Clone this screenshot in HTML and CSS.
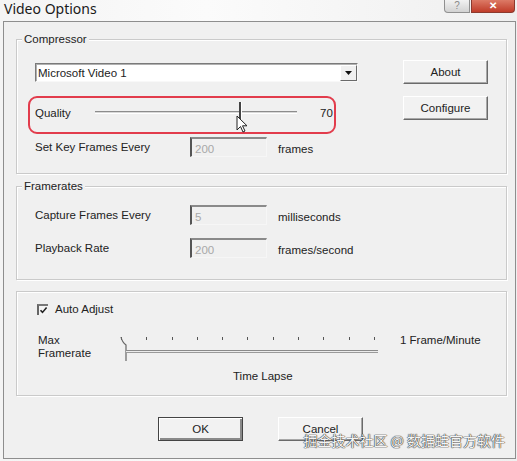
FILE: index.html
```html
<!DOCTYPE html>
<html lang="en">
<head>
    <meta charset="UTF-8">
    <title>Video Options</title>
    <link rel="stylesheet" href="styles.css">
</head>
<body>
    <div class="window">
        <div class="titlebar">
            <span class="title">Video Options</span>
            <div class="caption-buttons">
                <span class="cap-help">?</span>
                <span class="cap-close">&#x2715;</span>
            </div>
        </div>

        <div class="dialog">
            <div class="group group-compressor">
                <span class="group-label">Compressor</span>
                <div class="compressor">
                    <div class="compressor-main">
                        <div class="combo">
                            <span class="combo-text">Microsoft Video 1</span>
                            <span class="combo-drop">
                                <svg width="7" height="4" viewBox="0 0 7 4"><path d="M0 0h7L3.5 4z" fill="#111"/></svg>
                            </span>
                        </div>

                        <div class="quality">
                            <span class="quality-label">Quality</span>
                            <div class="track track-quality">
                                <span class="track-line"></span>
                                <span class="track-thumb"></span>
                            </div>
                            <span class="quality-value">70</span>
                            <svg class="cursor" width="12" height="18" viewBox="0 0 12 18">
                                <path d="M1 1v14l3.5-3.5 2.5 5.5 2-1-2.5-5.2H11z" fill="#fff" stroke="#222" stroke-width="1"/>
                            </svg>
                        </div>

                        <div class="field-row row-keyframes">
                            <span class="field-label">Set Key Frames Every</span>
                            <span class="field-input">200</span>
                            <span class="field-unit">frames</span>
                        </div>
                    </div>

                    <div class="compressor-side">
                        <button class="btn">About</button>
                        <button class="btn">Configure</button>
                    </div>
                </div>
            </div>

            <div class="group group-framerates">
                <span class="group-label">Framerates</span>
                <div class="field-row">
                    <span class="field-label">Capture Frames Every</span>
                    <span class="field-input">5</span>
                    <span class="field-unit">milliseconds</span>
                </div>
                <div class="field-row">
                    <span class="field-label">Playback Rate</span>
                    <span class="field-input">200</span>
                    <span class="field-unit">frames/second</span>
                </div>
            </div>

            <div class="group group-lapse">
                <label class="check-row">
                    <span class="checkbox">
                        <svg width="9" height="9" viewBox="0 0 9 9"><path d="M1.5 4.2l2 2.2L7.6 1.6" fill="none" stroke="#222" stroke-width="1.6"/></svg>
                    </span>
                    Auto Adjust
                </label>

                <div class="lapse-row">
                    <span class="lapse-label">Max<br>Framerate</span>
                    <div class="track track-lapse">
                        <div class="ticks">
                            <i></i><i></i><i></i><i></i><i></i><i></i><i></i><i></i><i></i><i></i><i></i>
                        </div>
                        <svg class="lapse-thumb" width="8" height="26" viewBox="0 0 8 26">
                            <path d="M1 1q1 5 5 8v16" fill="none" stroke="#666" stroke-width="1.2"/>
                        </svg>
                        <span class="lapse-line"></span>
                    </div>
                    <span class="lapse-max">1 Frame/Minute</span>
                </div>

                <div class="lapse-caption">Time Lapse</div>
            </div>

            <div class="dialog-buttons">
                <button class="btn btn-default">OK</button>
                <button class="btn">Cancel</button>
            </div>
        </div>

        <div class="watermark">掘金技术社区 @ 数据蛙官方软件</div>
    </div>
</body>
</html>
```

FILE: styles.css
```css
* {
    box-sizing: border-box;
}

body {
    margin: 0;
    background: #fff;
    font-family: "Liberation Sans", Arial, sans-serif;
    font-size: 11.5px;
    color: #222;
}

.window {
    position: relative;
    width: 517px;
    height: 461px;
    overflow: hidden;
    background: linear-gradient(90deg, #f4f4f4, #fbfbfb 40%, #efefef);
}

/* title bar */
.titlebar {
    height: 21px;
    display: flex;
    justify-content: space-between;
    align-items: flex-start;
    padding: 0 2px 0 4px;
}

.title {
    font-family: "Noto Sans", sans-serif;
    font-size: 14px;
    line-height: 17px;
    color: #1a1a1a;
}

.caption-buttons {
    display: flex;
    gap: 1px;
}

.cap-help,
.cap-close {
    height: 13px;
    display: flex;
    align-items: center;
    justify-content: center;
    font-size: 10px;
    line-height: 1;
}

.cap-help {
    width: 26px;
    border: 1px solid #909090;
    border-top: none;
    border-radius: 0 0 0 4px;
    background: linear-gradient(#f2f2f2, #d2d2d2);
    color: #8a8a8a;
}

.cap-close {
    width: 44px;
    border: 1px solid #8c3a2e;
    border-top: none;
    border-radius: 0 0 4px 0;
    background: linear-gradient(#dc7a66, #c03c29);
    color: #fff;
    font-weight: bold;
}

/* dialog body */
.dialog {
    height: 438px;
    margin: 0 1px 0 3px;
    padding: 17px 8px 0 12px;
    border: 1px solid #8e8e8e;
    background: #f0f0f0;
}

.group {
    position: relative;
    border: 1px solid #cacaca;
    box-shadow: inset 1px 1px 0 #fff, 1px 1px 0 #fff;
}

.group-label {
    position: absolute;
    top: -8px;
    left: 5px;
    padding: 0 2px;
    line-height: 14px;
    background: #f0f0f0;
}

.group-compressor {
    padding: 20px 18px 16px 18px;
}

.group-framerates {
    margin-top: 12px;
    padding: 18px 18px 21px 18px;
    display: flex;
    flex-direction: column;
    gap: 13px;
}

.group-lapse {
    margin-top: 11px;
    padding: 10px 18px 12px 20px;
}

/* compressor */
.compressor {
    display: flex;
    justify-content: space-between;
}

.compressor-main {
    width: 323px;
}

.compressor-side {
    display: flex;
    flex-direction: column;
    gap: 12px;
}

.combo {
    height: 19px;
    margin-top: 3px;
    display: flex;
    align-items: stretch;
    border: 1px solid;
    border-color: #7a7a7a #f8f8f8 #f8f8f8 #7a7a7a;
    box-shadow: inset 1px 1px 0 #b0b0b0;
    background: #fff;
}

.combo-text {
    flex: 1;
    padding: 2px 0 0 2px;
    line-height: 14px;
}

.combo-drop {
    width: 17px;
    display: flex;
    align-items: center;
    justify-content: center;
    background: #f0f0f0;
    border: 1px solid;
    border-color: #fff #6a6a6a #6a6a6a #fff;
    margin: 1px 0 0 0;
}

.quality {
    position: relative;
    height: 38px;
    width: 308px;
    margin: 14px 0 0 -7px;
    padding: 0 0 0 5px;
    display: flex;
    align-items: flex-start;
    border: 2px solid #e23c4c;
    border-radius: 9px;
}

.quality-label {
    width: 60px;
    margin-top: 8px;
    line-height: 14px;
}

.track {
    position: relative;
}

.track-quality {
    width: 202px;
    height: 24px;
    margin-top: 4px;
}

.track-line {
    position: absolute;
    left: 0;
    right: 0;
    top: 9px;
    height: 3px;
    border-top: 1px solid #8c8c8c;
    border-bottom: 1px solid #fff;
    background: #d8d8d8;
}

.track-thumb {
    position: absolute;
    left: 144px;
    top: 0;
    width: 3px;
    height: 24px;
    border-left: 2px solid #444;
    border-right: 1px solid #fff;
}

.quality-value {
    margin: 8px 0 0 23px;
    line-height: 14px;
}

.cursor {
    position: absolute;
    left: 206px;
    top: 17px;
}

.field-row {
    display: flex;
    align-items: center;
    height: 20px;
}

.row-keyframes {
    margin-top: 3px;
}

.field-label {
    width: 155px;
}

.field-input {
    width: 77px;
    height: 20px;
    padding: 3px 0 0 3px;
    line-height: 14px;
    color: #a8a8a8;
    border-left: 2px solid #555;
    border-top: 2px solid #8a8a8a;
    border-right: 1px solid #f6f6f6;
    border-bottom: 1px solid #f6f6f6;
}

.field-unit {
    margin: 4px 0 0 11px;
}

/* buttons */
.btn {
    width: 85px;
    height: 24px;
    padding: 0;
    font-family: inherit;
    font-size: 11.5px;
    color: #222;
    background: #f2f2f2;
    border: 1px solid;
    border-color: #fff #6a6a6a #6a6a6a #fff;
    box-shadow: inset -1px -1px 0 #a8a8a8;
}

.btn-default {
    border-color: #444;
    box-shadow: inset 1px 1px 0 #fff, inset -2px -2px 0 #8a8a8a;
}

/* time lapse */
.check-row {
    display: flex;
    align-items: center;
    gap: 7px;
    line-height: 14px;
}

.checkbox {
    width: 11px;
    height: 11px;
    display: flex;
    align-items: center;
    justify-content: center;
    border-left: 2px solid #666;
    border-top: 2px solid #777;
    background: #f4f4f4;
}

.lapse-row {
    display: flex;
    align-items: flex-start;
    margin-top: 18px;
}

.lapse-label {
    width: 83px;
    padding-left: 1px;
    line-height: 13px;
}

.track-lapse {
    width: 258px;
    height: 27px;
}

.ticks {
    position: absolute;
    left: 1px;
    width: 254px;
    top: 3px;
    display: flex;
    justify-content: space-between;
}

.ticks i {
    width: 1px;
    height: 3px;
    background: #555;
}

.lapse-thumb {
    position: absolute;
    left: 0;
    top: 2px;
}

.lapse-line {
    position: absolute;
    left: 6px;
    right: 0;
    top: 16px;
    height: 3px;
    border-top: 1px solid #8a8a8a;
    border-bottom: 1px solid #9a9a9a;
    background: #ececec;
}

.lapse-max {
    margin-left: 22px;
    line-height: 13px;
}

.lapse-caption {
    margin: 8px 0 0 196px;
    line-height: 14px;
}

.dialog-buttons {
    display: flex;
    gap: 35px;
    margin: 21px 0 0 142px;
}

.watermark {
    position: absolute;
    right: 12px;
    bottom: 11px;
    font-family: "Noto Sans CJK SC", sans-serif;
    font-size: 14px;
    line-height: 20px;
    color: #f4f4f4;
    text-shadow: 0 0 1px #333, 0 0 1px #333, 0 0 1px #444;
}
```
